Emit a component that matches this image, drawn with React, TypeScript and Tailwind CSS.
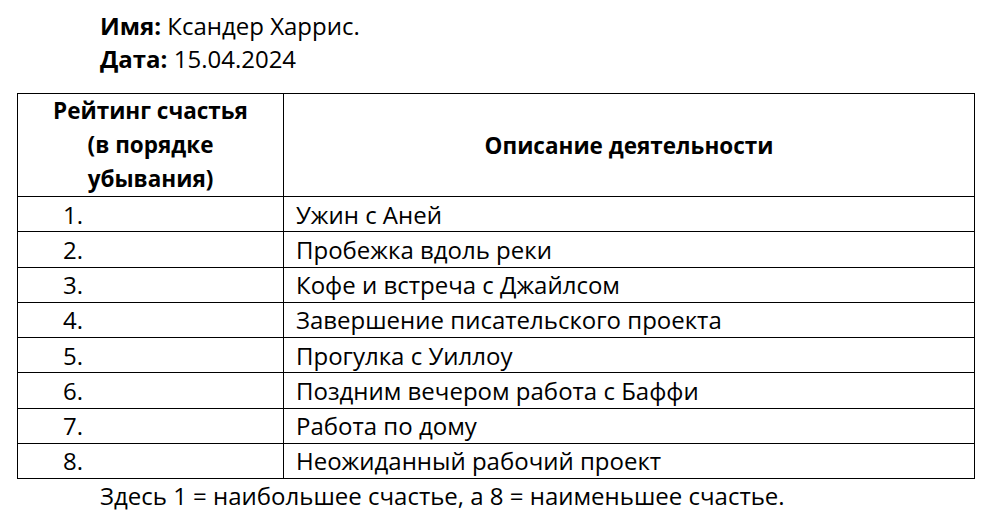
import React from "react";

const rows = [
  "Ужин с Аней",
  "Пробежка вдоль реки",
  "Кофе и встреча с Джайлсом",
  "Завершение писательского проекта",
  "Прогулка с Уиллоу",
  "Поздним вечером работа с Баффи",
  "Работа по дому",
  "Неожиданный рабочий проект",
];

export default function App() {
  return (
    <main
      className="w-[993px] h-[523px] bg-white text-black text-[24px] leading-[33px] overflow-hidden"
      style={{ fontFamily: '"Open Sans", "Noto Sans", sans-serif' }}
    >
      {/* name and date */}
      <div className="pl-[100px] pt-[9px]">
        <p>
          <span className="font-bold">Имя:</span> Ксандер Харрис.
        </p>
        <p>
          <span className="font-bold">Дата:</span> 15.04.2024
        </p>
      </div>

      {/* rating table */}
      <table className="ml-[17px] mt-[18px] w-[958px] border-collapse">
        <thead>
          <tr className="h-[103px]">
            <th className="w-[266px] border border-black font-bold text-[22.5px] text-center align-middle leading-[34px]">
              Рейтинг счастья
              <br />
              (в порядке
              <br />
              убывания)
            </th>
            <th className="border border-black font-bold text-[22.5px] text-center align-middle">
              Описание деятельности
            </th>
          </tr>
        </thead>
        <tbody>
          {rows.map((text, i) => (
            <tr key={i} className="h-[35.25px]">
              <td className="border border-black pl-[45px] align-middle leading-[33px]">{i + 1}.</td>
              <td className="border border-black pl-[12px] align-middle leading-[33px]">{text}</td>
            </tr>
          ))}
        </tbody>
      </table>

      <p className="pl-[100px]">
        Здесь 1 = наибольшее счастье, а 8 = наименьшее счастье.
      </p>
    </main>
  );
}
